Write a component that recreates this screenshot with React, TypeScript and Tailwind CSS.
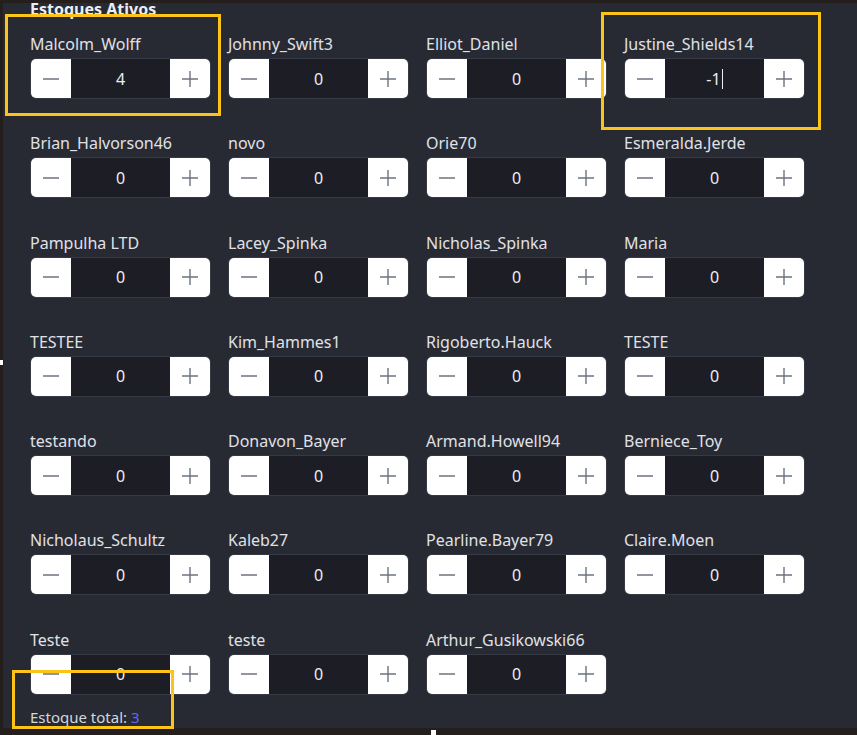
import { useState } from "react";

interface Stock {
  id: string;
  name: string;
  amount: number;
}

const initialStocks: Stock[] = [
  { id: "1", name: "Malcolm_Wolff", amount: 4 },
  { id: "2", name: "Johnny_Swift3", amount: 0 },
  { id: "3", name: "Elliot_Daniel", amount: 0 },
  { id: "4", name: "Justine_Shields14", amount: -1 },
  { id: "5", name: "Brian_Halvorson46", amount: 0 },
  { id: "6", name: "novo", amount: 0 },
  { id: "7", name: "Orie70", amount: 0 },
  { id: "8", name: "Esmeralda.Jerde", amount: 0 },
  { id: "9", name: "Pampulha LTD", amount: 0 },
  { id: "10", name: "Lacey_Spinka", amount: 0 },
  { id: "11", name: "Nicholas_Spinka", amount: 0 },
  { id: "12", name: "Maria", amount: 0 },
  { id: "13", name: "TESTEE", amount: 0 },
  { id: "14", name: "Kim_Hammes1", amount: 0 },
  { id: "15", name: "Rigoberto.Hauck", amount: 0 },
  { id: "16", name: "TESTE", amount: 0 },
  { id: "17", name: "testando", amount: 0 },
  { id: "18", name: "Donavon_Bayer", amount: 0 },
  { id: "19", name: "Armand.Howell94", amount: 0 },
  { id: "20", name: "Berniece_Toy", amount: 0 },
  { id: "21", name: "Nicholaus_Schultz", amount: 0 },
  { id: "22", name: "Kaleb27", amount: 0 },
  { id: "23", name: "Pearline.Bayer79", amount: 0 },
  { id: "24", name: "Claire.Moen", amount: 0 },
  { id: "25", name: "Teste", amount: 0 },
  { id: "26", name: "teste", amount: 0 },
  { id: "27", name: "Arthur_Gusikowski66", amount: 0 },
];

function MinusIcon() {
  return (
    <svg width="18" height="18" viewBox="0 0 18 18" fill="none">
      <line x1="1" y1="9" x2="17" y2="9" stroke="#6b7280" strokeWidth="1.6" />
    </svg>
  );
}

function PlusIcon() {
  return (
    <svg width="18" height="18" viewBox="0 0 18 18" fill="none">
      <line x1="1" y1="9" x2="17" y2="9" stroke="#6b7280" strokeWidth="1.4" />
      <line x1="9" y1="1" x2="9" y2="17" stroke="#6b7280" strokeWidth="1.4" />
    </svg>
  );
}

function Stepper({
  stock,
  focused,
  onChange,
}: {
  stock: Stock;
  focused: boolean;
  onChange: (value: number) => void;
}) {
  return (
    <div className="flex flex-col">
      <label className="text-[16px] leading-[22px] text-[#e0e1e6] whitespace-nowrap">{stock.name}</label>
      <div className="mt-[3px] flex h-[41px] w-[181px] overflow-hidden rounded-md border border-[#363a45]">
        <button
          className="flex w-[40px] items-center justify-center bg-white"
          onClick={() => onChange(stock.amount - 1)}
        >
          <MinusIcon />
        </button>
        <div className="flex flex-1 items-center justify-center bg-[#1d1e25] text-[16px] text-[#eceef2]">
          <span>{stock.amount}</span>
          {focused && <span className="ml-px inline-block h-[20px] w-px bg-[#eceef2]" />}
        </div>
        <button
          className="flex w-[40px] items-center justify-center bg-white"
          onClick={() => onChange(stock.amount + 1)}
        >
          <PlusIcon />
        </button>
      </div>
    </div>
  );
}

export default function App() {
  const [stocks, setStocks] = useState<Stock[]>(initialStocks);
  const total = stocks.reduce((sum, s) => sum + s.amount, 0);

  const update = (id: string, value: number) => {
    setStocks((prev) => prev.map((s) => (s.id === id ? { ...s, amount: value } : s)));
  };

  return (
    <div className="relative h-[735px] w-[857px] overflow-hidden bg-[#241e1d] pb-[7px] pl-[3px] pt-[3px] font-['Noto_Sans',sans-serif]">
      <div className="h-full overflow-hidden bg-[#272a33] pl-[27px]">
        <h2 className="-mt-[6px] text-[16px] font-bold leading-[24px] text-[#eceef2]">Estoques Ativos</h2>
        <div className="mt-[12px] grid grid-cols-[181px_181px_181px_181px] gap-x-[17px] gap-y-[33.3px]">
          {stocks.map((stock) => (
            <Stepper
              key={stock.id}
              stock={stock}
              focused={stock.id === "4"}
              onChange={(v) => update(stock.id, v)}
            />
          ))}
        </div>
        <p className="mt-[12px] text-[15px] leading-[20px] text-[#d4d6dc]">
          Estoque total: <span className="text-[#6366f1]">{total}</span>
        </p>
      </div>

      {/* annotation boxes */}
      <div className="pointer-events-none absolute left-[5px] top-[14px] h-[102px] w-[216px] border-[3px] border-[#fcc419]" />
      <div className="pointer-events-none absolute left-[601px] top-[12px] h-[118px] w-[220px] border-[3px] border-[#fcc419]" />
      <div className="pointer-events-none absolute left-[12px] top-[670px] h-[59px] w-[162px] border-[3px] border-[#fcc419]" />

      {/* resize handles */}
      <div className="absolute left-[-3px] top-[359px] h-[7px] w-[7px] border border-[#222] bg-white" />
      <div className="absolute left-[430px] top-[729px] h-[7px] w-[7px] border border-[#222] bg-white" />
    </div>
  );
}
